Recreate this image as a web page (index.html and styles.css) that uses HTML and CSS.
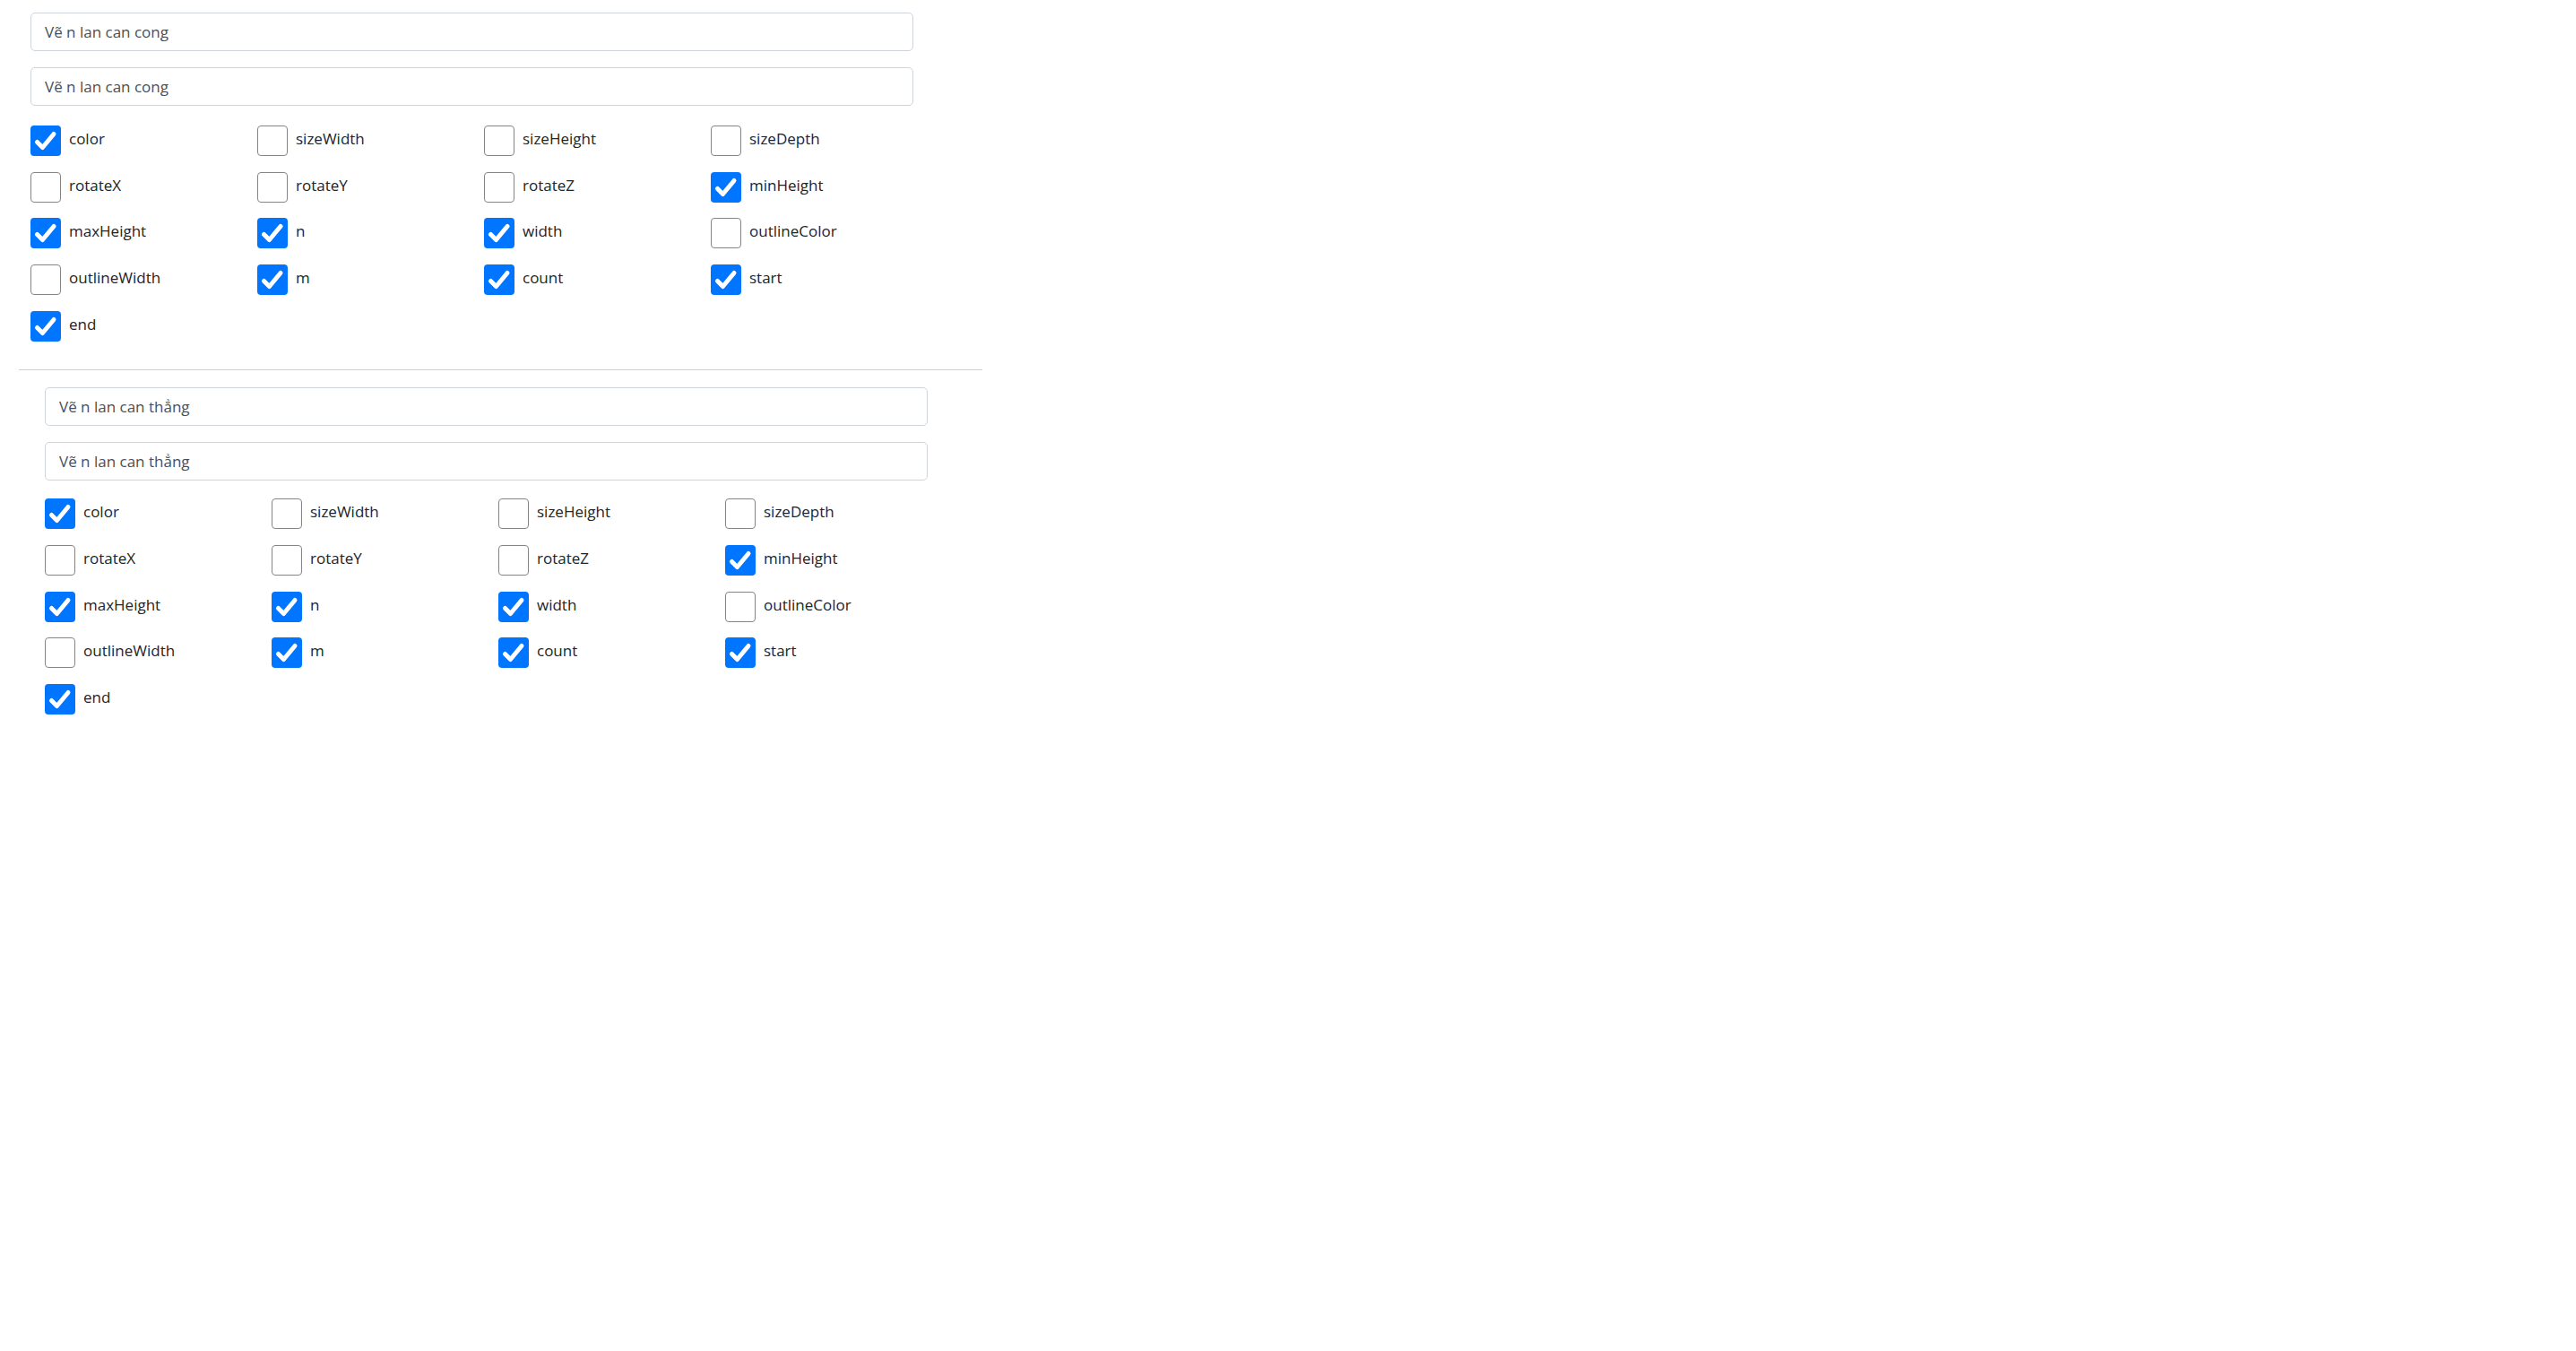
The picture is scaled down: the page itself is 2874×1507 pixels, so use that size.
FILE: index.html
```html
<!DOCTYPE html>
<html lang="vi">
<head>
<meta charset="utf-8">
<title>Lan can</title>
<link rel="stylesheet" href="styles.css">
</head>
<body>
<section class="block block-first">
  <input class="field" type="text" value="Vẽ n lan can cong">
  <input class="field" type="text" value="Vẽ n lan can cong">
  <div class="opts">
    <label class="opt"><span class="box on"><svg viewBox="0 0 34 34"><path d="M7.5 18.5 L13.5 24.5 L26 9.5"/></svg></span><span class="txt">color</span></label>
    <label class="opt"><span class="box"></span><span class="txt">sizeWidth</span></label>
    <label class="opt"><span class="box"></span><span class="txt">sizeHeight</span></label>
    <label class="opt"><span class="box"></span><span class="txt">sizeDepth</span></label>
    <label class="opt"><span class="box"></span><span class="txt">rotateX</span></label>
    <label class="opt"><span class="box"></span><span class="txt">rotateY</span></label>
    <label class="opt"><span class="box"></span><span class="txt">rotateZ</span></label>
    <label class="opt"><span class="box on"><svg viewBox="0 0 34 34"><path d="M7.5 18.5 L13.5 24.5 L26 9.5"/></svg></span><span class="txt">minHeight</span></label>
    <label class="opt"><span class="box on"><svg viewBox="0 0 34 34"><path d="M7.5 18.5 L13.5 24.5 L26 9.5"/></svg></span><span class="txt">maxHeight</span></label>
    <label class="opt"><span class="box on"><svg viewBox="0 0 34 34"><path d="M7.5 18.5 L13.5 24.5 L26 9.5"/></svg></span><span class="txt">n</span></label>
    <label class="opt"><span class="box on"><svg viewBox="0 0 34 34"><path d="M7.5 18.5 L13.5 24.5 L26 9.5"/></svg></span><span class="txt">width</span></label>
    <label class="opt"><span class="box"></span><span class="txt">outlineColor</span></label>
    <label class="opt"><span class="box"></span><span class="txt">outlineWidth</span></label>
    <label class="opt"><span class="box on"><svg viewBox="0 0 34 34"><path d="M7.5 18.5 L13.5 24.5 L26 9.5"/></svg></span><span class="txt">m</span></label>
    <label class="opt"><span class="box on"><svg viewBox="0 0 34 34"><path d="M7.5 18.5 L13.5 24.5 L26 9.5"/></svg></span><span class="txt">count</span></label>
    <label class="opt"><span class="box on"><svg viewBox="0 0 34 34"><path d="M7.5 18.5 L13.5 24.5 L26 9.5"/></svg></span><span class="txt">start</span></label>
    <label class="opt"><span class="box on"><svg viewBox="0 0 34 34"><path d="M7.5 18.5 L13.5 24.5 L26 9.5"/></svg></span><span class="txt">end</span></label>
  </div>
</section>
<hr class="sep">
<section class="block block-second">
  <input class="field" type="text" value="Vẽ n lan can thẳng">
  <input class="field" type="text" value="Vẽ n lan can thẳng">
  <div class="opts">
    <label class="opt"><span class="box on"><svg viewBox="0 0 34 34"><path d="M7.5 18.5 L13.5 24.5 L26 9.5"/></svg></span><span class="txt">color</span></label>
    <label class="opt"><span class="box"></span><span class="txt">sizeWidth</span></label>
    <label class="opt"><span class="box"></span><span class="txt">sizeHeight</span></label>
    <label class="opt"><span class="box"></span><span class="txt">sizeDepth</span></label>
    <label class="opt"><span class="box"></span><span class="txt">rotateX</span></label>
    <label class="opt"><span class="box"></span><span class="txt">rotateY</span></label>
    <label class="opt"><span class="box"></span><span class="txt">rotateZ</span></label>
    <label class="opt"><span class="box on"><svg viewBox="0 0 34 34"><path d="M7.5 18.5 L13.5 24.5 L26 9.5"/></svg></span><span class="txt">minHeight</span></label>
    <label class="opt"><span class="box on"><svg viewBox="0 0 34 34"><path d="M7.5 18.5 L13.5 24.5 L26 9.5"/></svg></span><span class="txt">maxHeight</span></label>
    <label class="opt"><span class="box on"><svg viewBox="0 0 34 34"><path d="M7.5 18.5 L13.5 24.5 L26 9.5"/></svg></span><span class="txt">n</span></label>
    <label class="opt"><span class="box on"><svg viewBox="0 0 34 34"><path d="M7.5 18.5 L13.5 24.5 L26 9.5"/></svg></span><span class="txt">width</span></label>
    <label class="opt"><span class="box"></span><span class="txt">outlineColor</span></label>
    <label class="opt"><span class="box"></span><span class="txt">outlineWidth</span></label>
    <label class="opt"><span class="box on"><svg viewBox="0 0 34 34"><path d="M7.5 18.5 L13.5 24.5 L26 9.5"/></svg></span><span class="txt">m</span></label>
    <label class="opt"><span class="box on"><svg viewBox="0 0 34 34"><path d="M7.5 18.5 L13.5 24.5 L26 9.5"/></svg></span><span class="txt">count</span></label>
    <label class="opt"><span class="box on"><svg viewBox="0 0 34 34"><path d="M7.5 18.5 L13.5 24.5 L26 9.5"/></svg></span><span class="txt">start</span></label>
    <label class="opt"><span class="box on"><svg viewBox="0 0 34 34"><path d="M7.5 18.5 L13.5 24.5 L26 9.5"/></svg></span><span class="txt">end</span></label>
  </div>
</section>
</body>
</html>
```

FILE: styles.css
```css
html, body {
  margin: 0;
  padding: 0;
  background: #ffffff;
}

body {
  font-family: "Open Sans", "Noto Sans", "Liberation Sans", sans-serif;
  font-size: 17px;
  color: #212529;
}

.block {
  display: flex;
  flex-direction: column;
  align-items: flex-start;
}

.block-first {
  padding: 14px 0 0 34px;
}

.block-second {
  padding: 19px 0 0 50px;
}

.field {
  box-sizing: border-box;
  width: 985px;
  height: 43px;
  margin: 0 0 18px 0;
  padding: 0 15px;
  border: 1px solid #ced4da;
  border-radius: 5px;
  background: #fff;
  font-family: inherit;
  font-size: 17px;
  color: #495057;
  outline: none;
}

.opts {
  display: grid;
  grid-template-columns: repeat(4, 253px);
  grid-auto-rows: 34px;
  row-gap: 17.7px;
  margin-top: 4px;
}

.block-second .opts {
  margin-top: 2.5px;
}

.opt {
  display: flex;
  align-items: center;
  gap: 9px;
  cursor: pointer;
}

.box {
  box-sizing: border-box;
  flex: 0 0 34px;
  width: 34px;
  height: 34px;
  border: 1.5px solid #858585;
  border-radius: 4px;
  background: #fff;
  display: flex;
}

.box.on {
  border: none;
  background: #0075ff;
}

.box svg {
  width: 34px;
  height: 34px;
}

.box svg path {
  fill: none;
  stroke: #ffffff;
  stroke-width: 5;
  stroke-linecap: round;
  stroke-linejoin: round;
}

.txt {
  line-height: 1;
  margin-top: -5px;
}

.sep {
  margin: 31px 0 0 21px;
  width: 1075px;
  height: 0;
  border: none;
  border-top: 1px solid #d0d0d0;
}
```
